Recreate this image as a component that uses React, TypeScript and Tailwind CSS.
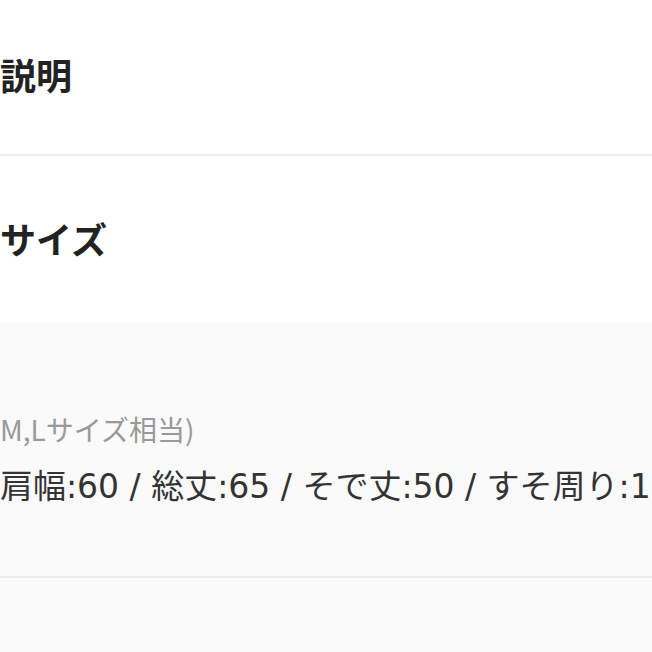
const JP = '"Hiragino Sans", "Noto Sans CJK JP", "Noto Sans", sans-serif';
const JP_WIDE = '"DejaVu Sans", "Noto Sans CJK JP", sans-serif';

function Heading({ children, top }: { children: React.ReactNode; top: string }) {
  return (
    <div className={top}>
      <h2 className="h-[40px] leading-[40px] text-[36px] font-bold text-[#222] whitespace-nowrap">{children}</h2>
    </div>
  );
}

export default function App() {
  return (
    <div className="w-[652px] h-[652px] overflow-hidden bg-white" style={{ fontFamily: JP }}>
      <section className="h-[156px] border-b-2 border-[#efefef]">
        <Heading top="pt-[54px]">説明</Heading>
      </section>

      <section className="h-[166px]">
        <Heading top="pt-[62px]">サイズ</Heading>
      </section>

      <section className="h-[256px] bg-[#fafafa] border-b-2 border-[#e9e9e9] pt-[87px]">
        <p className="h-[40px] leading-[40px] text-[28px] text-[#999] whitespace-nowrap">
          M,Lサイズ相当)
        </p>
        <p
          className="mt-[16px] h-[44px] leading-[44px] text-[33px] text-[#333] whitespace-nowrap"
          style={{ fontFamily: JP_WIDE }}
        >
          肩幅:60 / 総丈:65 / そで丈:50 / すそ周り:110
        </p>
      </section>

      <div className="h-full bg-[#fafafa]" />
    </div>
  );
}
